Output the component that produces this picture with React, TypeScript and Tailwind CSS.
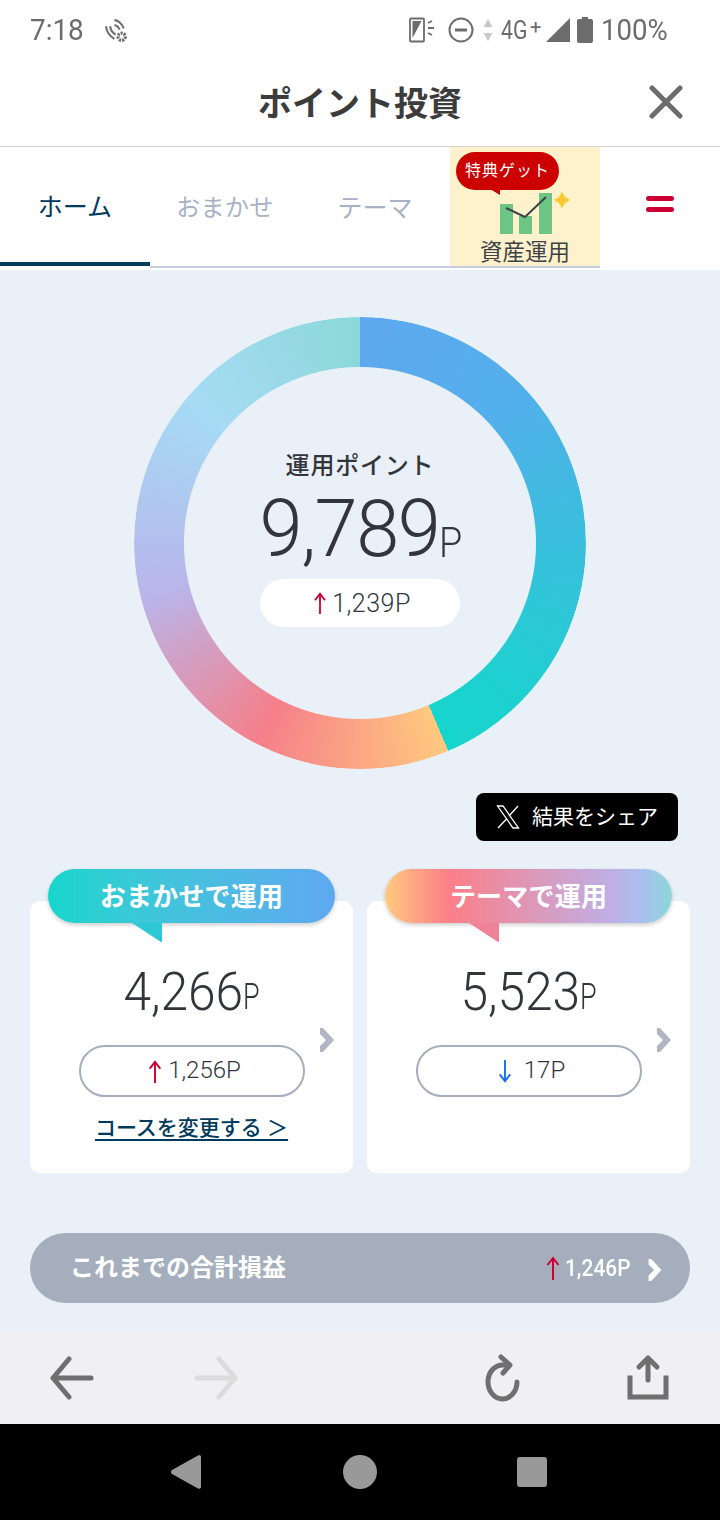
import React from "react";

const Arrow = ({ up = true, className = "" }: { up?: boolean; className?: string }) => (
  <svg viewBox="0 0 14 24" className={className} fill="none" stroke="currentColor" strokeWidth="2">
    {up ? (
      <>
        <path d="M7 24V2" />
        <path d="M1.5 9L7 2l5.500 7" />
      </>
    ) : (
      <>
        <path d="M7 0v22" />
        <path d="M1.500 15L7 22l5.500-7" />
      </>
    )}
  </svg>
);

const Chevron = ({ className = "" }: { className?: string }) => (
  <svg viewBox="0 0 14 24" className={className} fill="currentColor">
    <path d="M0 0l3 0 11 12-11 12-3 0 0-6 6-6-6-6z" />
  </svg>
);

const StatusBar = () => (
  <div className="h-[60px] flex items-center pl-[30px] pr-[53px] text-[#6c6c6c] text-[30px] leading-none">
    <span className="w-[74px] scale-x-[.93] origin-left">7:18</span>
    <svg viewBox="0 0 24 24" className="w-[25px] h-[25px]" fill="none" stroke="#6c6c6c" strokeWidth="2">
      <path d="M2 8c0 5 4 10 8 12" />
      <path d="M6 8c0 3 2 6 5 8" />
      <path d="M10 2c3 0 7 3 9 8" />
      <path d="M10 7c2 0 4 2 5 4" />
      <circle cx="17" cy="18" r="3.500" strokeWidth="3" strokeDasharray="2 1" />
    </svg>
    <div className="flex-1" />
    <svg viewBox="0 0 27 26" className="w-[27px] h-[26px]" fill="none" stroke="#6c6c6c" strokeWidth="1.800">
      <rect x="1" y="1.500" width="14" height="23" rx="1" />
      <path d="M3.500 4h9l-9 17z" fill="#6c6c6c" stroke="none" />
      <path d="M19 6l4-2M19 11h6M19 16l4 2" />
    </svg>
    <svg viewBox="0 0 26 26" className="w-[26px] h-[26px] ml-[12px]" fill="none" stroke="#6c6c6c" strokeWidth="2">
      <circle cx="13" cy="13" r="11.500" />
      <path d="M7 13h12" strokeWidth="3" />
    </svg>
    <svg viewBox="0 0 10 22" className="w-[10px] h-[22px] ml-[9px]" fill="#c9c9c9">
      <path d="M5 0l4.500 8h-9zM.5 14h9L5 22z" />
    </svg>
    <span className="text-[25px] ml-[8px] scale-x-[.85] origin-left w-[29px]">4G</span>
    <span className="text-[20px] -mt-[6px] w-[12px]">+</span>
    <svg viewBox="0 0 20 20" className="w-[24px] h-[24px] ml-[4px]" fill="#6c6c6c">
      <path d="M20 0v20H0z" />
    </svg>
    <svg viewBox="0 0 16 26" className="w-[16px] h-[26px] ml-[7px]" fill="#6c6c6c">
      <path d="M5 0h6v2h3a2 2 0 0 1 2 2v20a2 2 0 0 1-2 2H2a2 2 0 0 1-2-2V4a2 2 0 0 1 2-2h3z" />
    </svg>
    <span className="ml-[8px] w-[66px] whitespace-nowrap scale-x-[.92] origin-left">100%</span>
  </div>
);

const Header = () => (
  <div className="h-[87px] flex items-center justify-center relative border-b border-[#d3d3d3] pt-[2px]">
    <span className="text-[34px] font-bold text-[#3c3c3c] leading-none">ポイント投資</span>
    <svg viewBox="0 0 34 34" className="absolute left-[649px] top-[25px] w-[34px] h-[34px]" stroke="#6c6c6c" strokeWidth="5" strokeLinecap="round">
      <path d="M3 3l28 28M31 3L3 31" />
    </svg>
  </div>
);

const Tabs = () => (
  <div className="h-[123px] flex bg-white">
    <div className="w-[150px] h-[119px] flex items-center justify-center text-[#003a5c] text-[25px] border-b-[4px] border-[#003a5c] pt-[5px] leading-none">
      ホーム
    </div>
    <div className="w-[150px] h-[121px] flex items-center justify-center text-[#a7b2c4] text-[24px] tracking-[.4px] border-b-[2px] border-[#c5cede] pt-[3px] leading-none">
      おまかせ
    </div>
    <div className="w-[150px] h-[121px] flex items-center justify-center text-[#a7b2c4] text-[25px] border-b-[2px] border-[#c5cede] pt-[3px] leading-none">
      テーマ
    </div>
    <div className="w-[150px] h-[121px] bg-[#fef2cc] border-b-[2px] border-[#c5cede] relative flex flex-col items-center justify-end">
      <div className="absolute left-[6px] top-[5px] w-[103px] h-[38px] rounded-full bg-[#cc0000] text-white text-[16px] tracking-[1px] flex items-center justify-center leading-none">
        特典ゲット
      </div>
      <svg viewBox="0 0 10 6" className="absolute left-[40px] top-[42px] w-[10px] h-[6px]" fill="#cc0000">
        <path d="M0 0h10v6z" />
      </svg>
      <svg viewBox="0 0 80 45" className="absolute left-[48px] top-[45px] w-[80px] h-[45px]">
        <path d="M2 12h13v30H2zM21 24h13v18H21zM41 1h13v41H41z" fill="#6cc585" />
        <path d="M8 16l19 9 21-20" fill="none" stroke="#3d4349" strokeWidth="2" />
        <path d="M64 0l3 5 5 3-5 3-3 5-3-5-5-3 5-3z" fill="#fdc82f" />
      </svg>
      <span className="text-[22.500px] text-[#3d4349] leading-none pb-[3px]">資産運用</span>
    </div>
    <div className="w-[120px] flex flex-col items-center gap-[6px] pt-[49px]">
      <div className="w-[28px] h-[5px] rounded-full bg-[#cc0033]" />
      <div className="w-[28px] h-[5px] rounded-full bg-[#cc0033]" />
    </div>
  </div>
);

const Donut = () => (
  <div className="relative w-[452px] h-[452px] mx-auto">
    <div className="absolute inset-0 rounded-full bg-[conic-gradient(#5ea8f0_0deg,#53afeb_45deg,#39bfdd_90deg,#1ed0d0_135deg,#16d5cc_157deg,#ffc97e_157deg,#f67f8a_207deg,#b8b6ec_257deg,#a6dbf4_310deg,#8cd8d8_360deg)] [mask:radial-gradient(circle,transparent_175.500px,black_176.500px)]" />
    <div className="absolute inset-0 flex flex-col items-center">
      <div className="mt-[134px] text-[24px] leading-[30px] font-medium tracking-[.8px] text-[#32363c]">運用ポイント</div>
      <div className="mt-[16px] -ml-[1px] h-[72px] flex items-end justify-center text-[#32363c] font-light leading-none">
        <span className="text-[80px] tracking-[-1.500px] scale-x-[.97] origin-right">9,789</span>
        <span className="text-[42px] pb-[5px] scale-x-[.9] origin-left">P</span>
      </div>
      <div className="mt-[10px] w-[200px] h-[48px] rounded-full bg-white flex items-center justify-center gap-[5px] pl-[4px] text-[25px] tracking-[.5px] font-light text-[#32363c] leading-none">
        <Arrow className="w-[14px] h-[22px] text-[#cc0033]" />
        <span>1,239P</span>
      </div>
    </div>
  </div>
);

const Card = ({
  tag,
  gradient,
  tail,
  num,
  up,
  delta,
  link,
}: {
  tag: string;
  gradient: string;
  tail: string;
  num: string;
  up: boolean;
  delta: string;
  link?: boolean;
}) => (
  <div className="relative h-[272px] bg-white rounded-[10px] flex flex-col items-center pt-[58px]">
    <div className={`absolute left-[18px] -top-[32px] w-[287px] h-[54px] rounded-full ${gradient} shadow-[0_2px_4px_rgba(0,0,0,0.2)] text-white font-bold text-[26px] tracking-[.2px] pt-[2px] flex items-center justify-center leading-none`}>
      {tag}
    </div>
    <svg viewBox="0 0 30 20" className="absolute left-[102px] top-[22px] w-[30px] h-[20px]">
      <path d="M0 0h30v19h-1z" fill={tail} />
    </svg>
    <div className="flex items-end h-[60px] text-[#32363c] font-light leading-none w-[323px] justify-center -ml-[9px]">
      <span className="text-[54px] scale-x-[.92] origin-right">{num}</span>
      <span className="text-[36px] pb-[4px] scale-x-[.75] origin-left -mr-[4px]">P</span>
    </div>
    <div className="mt-[26px] w-[226px] h-[52px] rounded-full border-2 border-[#a5aebd] flex items-center justify-center gap-[6px] pl-[6px] text-[24px] font-light text-[#32363c] leading-none">
      <Arrow up={up} className={`w-[14px] h-[23px] ${up ? "text-[#cc0033]" : "text-[#1a6cf0]"}`} />
      <span className={`-mt-[2px] ${up ? "" : "ml-[6px]"}`}>{delta}</span>
    </div>
    <Chevron className="absolute left-[290px] top-[127px] w-[14px] h-[24px] text-[#b0b6c2]" />
    {link && (
      <div className="mt-[17px] text-[21px] font-medium text-[#003a5c] underline underline-offset-[4px] leading-[28px] whitespace-nowrap">
        コースを変更する ＞
      </div>
    )}
  </div>
);

const Main = () => (
  <div className="h-[1062px] bg-[#eaf0f7] flex flex-col px-[30px] pt-[47px]">
    <Donut />
    <div className="flex justify-end mt-[24px] pr-[12px]">
      <div className="w-[202px] h-[48px] bg-black rounded-[8px] flex items-center text-white text-[21px] leading-none pl-[20px] gap-[12px]">
        <svg viewBox="0 0 24 24" className="w-[24px] h-[24px]" fill="none" stroke="white" strokeWidth="1.300">
          <path d="M1.500 1h5.500l15.500 22h-5.500zM22 1L13 11M11 13.500L2 23" />
        </svg>
        <span>結果をシェア</span>
      </div>
    </div>
    <div className="grid grid-cols-2 gap-[14px] mt-[60px]">
      <Card
        tag="おまかせで運用"
        gradient="bg-gradient-to-r from-[#14d6cc] to-[#5ea8f0]"
        tail="#2cc8d6"
        num="4,266"
        up
        delta="1,256P"
        link
      />
      <Card
        tag="テーマで運用"
        gradient="bg-[linear-gradient(90deg,#ffc97e_0%,#fb7f88_22%,#c0aee4_78%,#a8c0ee_90%,#8cd8d8_100%)]"
        tail="#ef8296"
        num="5,523"
        up={false}
        delta="17P"
      />
    </div>
    <div className="mt-[60px] h-[70px] rounded-full bg-[#a5aebd] flex items-center pl-[40px] pr-[28px] text-white leading-none">
      <span className="text-[24px] font-bold">これまでの合計損益</span>
      <div className="flex-1" />
      <Arrow className="w-[14px] h-[24px] text-[#cc0033]" />
      <span className="text-[24px] font-medium ml-[5px] scale-x-[.87] w-[66px] whitespace-nowrap origin-left">1,246P</span>
      <Chevron className="w-[14px] h-[22px] ml-[17px] mt-[3px] text-white" />
    </div>
  </div>
);

const BrowserBar = () => (
  <div className="h-[92px] bg-[#efeff4] flex items-center justify-between px-[50px]">
    <div className="flex gap-[100px]">
      <svg viewBox="0 0 44 44" className="w-[44px] h-[44px]" fill="none" stroke="#6f6f6f" strokeWidth="5" strokeLinecap="round" strokeLinejoin="round">
        <path d="M19 3L3 22l16 19M3 22h38" />
      </svg>
      <svg viewBox="0 0 44 44" className="w-[44px] h-[44px]" fill="none" stroke="#dcdcdc" strokeWidth="5" strokeLinecap="round" strokeLinejoin="round">
        <path d="M25 3l16 19-16 19M41 22H3" />
      </svg>
    </div>
    <div className="flex gap-[100px] items-center">
      <svg viewBox="0 0 44 48" className="w-[44px] h-[48px]" fill="none" stroke="#6f6f6f" strokeWidth="5" strokeLinecap="round" strokeLinejoin="round">
        <path d="M35 28a14.500 17 0 1 1-13-17" />
        <path d="M19 3l9 8-7 8" />
      </svg>
      <svg viewBox="0 0 44 48" className="w-[44px] h-[48px]" fill="none" stroke="#6f6f6f" strokeWidth="5" strokeLinecap="round" strokeLinejoin="round">
        <path d="M22 26V4M13 13l9-9 9 9" />
        <path d="M4 24v19h36V24" strokeLinecap="square" strokeLinejoin="miter" />
      </svg>
    </div>
  </div>
);

const NavBar = () => (
  <div className="h-[96px] bg-black flex items-center justify-center gap-[142px] pb-[1px]">
    <svg viewBox="0 0 30 34" className="w-[30px] h-[34px]" fill="#999999">
      <path d="M28 0a2 2 0 0 1 2 2v30a2 2 0 0 1-3 1.500L1 19a2.500 2.500 0 0 1 0-4L27 .5z" />
    </svg>
    <div className="w-[34px] h-[34px] rounded-full bg-[#999999]" />
    <div className="w-[30px] h-[30px] rounded-[3px] bg-[#999999] -ml-[2px] mr-[2px]" />
  </div>
);

export default function App() {
  return (
    <div className="w-[720px] h-[1520px] overflow-hidden bg-white [font-family:Roboto,'Noto_Sans_CJK_JP',sans-serif]">
      <StatusBar />
      <Header />
      <Tabs />
      <Main />
      <BrowserBar />
      <NavBar />
    </div>
  );
}
